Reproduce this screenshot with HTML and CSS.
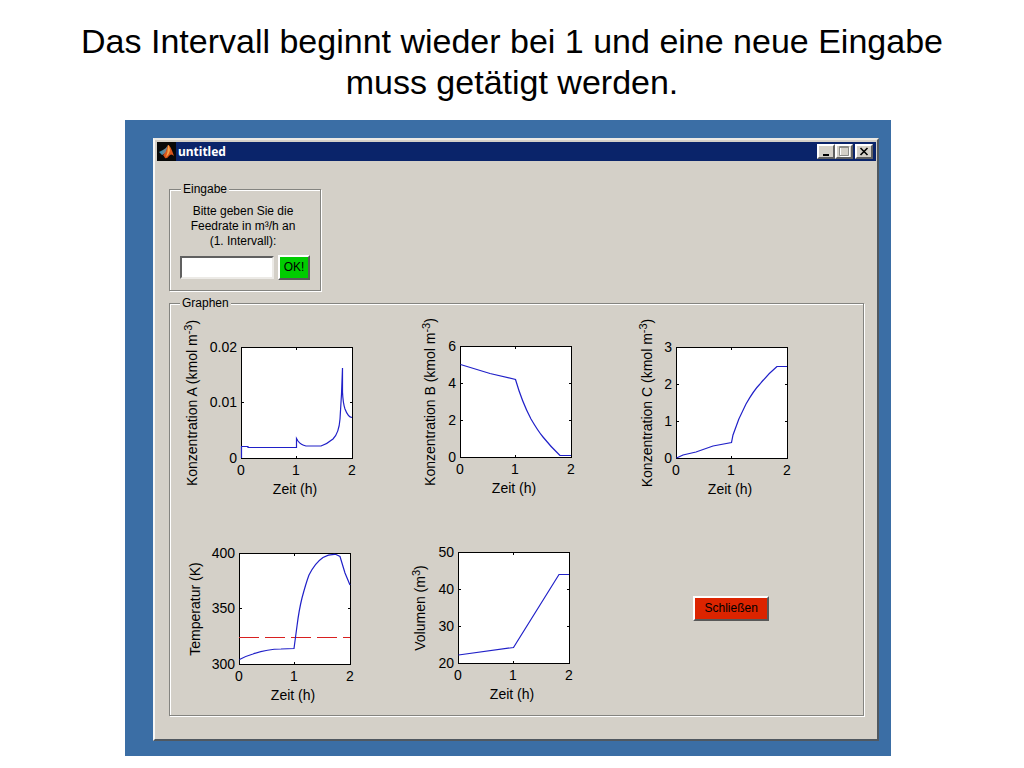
FILE: index.html
```html
<!DOCTYPE html>
<html lang="de">
<head>
<meta charset="utf-8">
<title>untitled</title>
<link rel="stylesheet" href="styles.css">
</head>
<body>
<h1 class="headline">Das Intervall beginnt wieder bei 1 und eine neue Eingabe<br>muss getätigt werden.</h1>
<main class="desktop">
  <section class="window">
    <header class="titlebar">
      <svg class="logo" viewBox="0 0 19 19" aria-hidden="true">
        <rect width="19" height="19" fill="#080808"/>
        <path d="M2 10 L6 8 L8 10 L5 13 Z" fill="#3f8fae"/>
        <path d="M6 8 Q9 7 11 3 L9 11 L5 13 Z" fill="#6b8795"/>
        <path d="M11 3 Q13 2 17 14 Q14 11 12 14 Q10 17 8 16 Q7 14 6 13 Q9 11 11 3 Z" fill="#d9541a"/>
        <path d="M11 3 Q12 3 13 8 Q12 13 9 15 Q11 10 11 3 Z" fill="#f6a54a"/>
      </svg>
      <span class="caption">untitled</span>
      <button class="winbtn" type="button" aria-label="Minimieren"><svg viewBox="0 0 14 11"><path d="M4 8h6v2H4z" fill="#000"/></svg></button>
      <button class="winbtn" type="button" aria-label="Maximieren"><svg viewBox="0 0 14 11"><path d="M3.500 1.500h9v9h-9z" fill="none" stroke="#fff"/><path d="M2.500 .500h9v9h-9z M2.500 1.500h9" fill="none" stroke="#8c8c88"/></svg></button>
      <button class="winbtn close" type="button" aria-label="Fenster schließen"><svg viewBox="0 0 14 11"><path d="M3.500 2l7 7M10.500 2l-7 7" stroke="#000" stroke-width="1.600"/></svg></button>
    </header>
    <div class="client">
      <fieldset class="panel entry">
        <legend>Eingabe</legend>
        <label class="prompt" for="feed">Bitte geben Sie die<br>Feedrate in m³/h an<br>(1. Intervall):</label>
        <div class="row">
          <input class="feed" id="feed" type="text">
          <button class="push ok" type="button">OK!</button>
        </div>
      </fieldset>
      <fieldset class="panel graphs">
        <legend>Graphen</legend>
        <div class="grid">
          <svg class="chart" width="190" height="190" role="img" aria-label="Konzentration A">
            <g transform="translate(60 36)">
              <rect class="plot" x=".5" y=".5" width="111" height="111"/>
              <path class="tick" d="M55.500 1v2M55.500 111v-2M1 55.500h2M111 55.500h-2"/>
              <path class="curve" d="M.5 111V99.500H7V100.500H55.500V91.500L57 94Q60 98 65 99H80Q86 97 92 92Q98 86 99 72L100.500 47L101.500 21V45Q102 56 104 62Q107 70 111 70.500"/>
              <g class="yt"><text x="-4" y="5">0.02</text><text x="-4" y="60">0.01</text><text x="-4" y="116">0</text></g>
              <g class="xt"><text x="0" y="128">0</text><text x="55" y="128">1</text><text x="111" y="128">2</text><text x="54" y="147">Zeit (h)</text></g>
              <text class="yl" transform="translate(-44 56) rotate(-90)">Konzentration A (kmol m<tspan class="sup" dy="-5">-3</tspan><tspan dy="5">)</tspan></text>
            </g>
          </svg>
          <svg class="chart" width="190" height="190" role="img" aria-label="Konzentration B">
            <g transform="translate(61 35)">
              <rect class="plot" x=".5" y=".5" width="111" height="111"/>
              <path class="tick" d="M55.500 1v2M55.500 111v-2M1 37.500h2M111 37.500h-2M1 74.500h2M111 74.500h-2"/>
              <path class="curve" d="M.5 18.500L30 27.500L55.500 33.500Q62 56 71 73Q78 85 83 91Q91 101 100 109.500H111"/>
              <g class="yt"><text x="-4" y="5">6</text><text x="-4" y="42">4</text><text x="-4" y="79">2</text><text x="-4" y="116">0</text></g>
              <g class="xt"><text x="0" y="128">0</text><text x="55" y="128">1</text><text x="111" y="128">2</text><text x="54" y="147">Zeit (h)</text></g>
              <text class="yl" transform="translate(-25 56) rotate(-90)">Konzentration B (kmol m<tspan class="sup" dy="-5">-3</tspan><tspan dy="5">)</tspan></text>
            </g>
          </svg>
          <svg class="chart" width="190" height="190" role="img" aria-label="Konzentration C">
            <g transform="translate(60 36)">
              <rect class="plot" x=".5" y=".5" width="111" height="111"/>
              <path class="tick" d="M55.500 1v2M55.500 111v-2M1 37.500h2M111 37.500h-2M1 74.500h2M111 74.500h-2"/>
              <path class="curve" d="M.5 111L7 108L20 105L37 99L55.500 95.500L57 88Q62 72 70 57Q78 43 84 37Q92 27 101 19.500H111"/>
              <g class="yt"><text x="-4" y="5">3</text><text x="-4" y="42">2</text><text x="-4" y="79">1</text><text x="-4" y="116">0</text></g>
              <g class="xt"><text x="0" y="128">0</text><text x="55" y="128">1</text><text x="111" y="128">2</text><text x="54" y="147">Zeit (h)</text></g>
              <text class="yl" transform="translate(-24 56) rotate(-90)">Konzentration C (kmol m<tspan class="sup" dy="-5">-3</tspan><tspan dy="5">)</tspan></text>
            </g>
          </svg>
          <svg class="chart" width="190" height="190" role="img" aria-label="Temperatur">
            <g transform="translate(58 36)">
              <rect class="plot" x=".5" y=".5" width="111" height="111"/>
              <path class="tick" d="M55.500 1v2M55.500 111v-2M1 55.500h2M111 55.500h-2"/>
              <path class="limit" d="M0 84.500H111"/>
              <path class="curve" d="M.5 106.500Q7 103 14 101Q28 96 42 96L55 95.500L58 73Q60 57 63 45Q67 30 70 22Q76 10 84 4.500Q90 1 97 1.500L101 3.500L106 20L111 32"/>
              <g class="yt"><text x="-4" y="5">400</text><text x="-4" y="60">350</text><text x="-4" y="116">300</text></g>
              <g class="xt"><text x="0" y="128">0</text><text x="55" y="128">1</text><text x="111" y="128">2</text><text x="54" y="147">Zeit (h)</text></g>
              <text class="yl" transform="translate(-39 56) rotate(-90)">Temperatur (K)</text>
            </g>
          </svg>
          <svg class="chart" width="190" height="190" role="img" aria-label="Volumen">
            <g transform="translate(59 35)">
              <rect class="plot" x=".5" y=".5" width="111" height="111"/>
              <path class="tick" d="M55.500 1v2M55.500 111v-2M1 37.500h2M111 37.500h-2M1 74.500h2M111 74.500h-2"/>
              <path class="curve" d="M.5 103L55.500 95.500L101 22.500H111"/>
              <g class="yt"><text x="-4" y="5">50</text><text x="-4" y="42">40</text><text x="-4" y="79">30</text><text x="-4" y="116">20</text></g>
              <g class="xt"><text x="0" y="128">0</text><text x="55" y="128">1</text><text x="111" y="128">2</text><text x="54" y="147">Zeit (h)</text></g>
              <text class="yl" transform="translate(-33 56) rotate(-90)">Volumen (m<tspan class="sup" dy="-5">3</tspan><tspan dy="5">)</tspan></text>
            </g>
          </svg>
          <button class="push quit" type="button">Schließen</button>
        </div>
      </fieldset>
    </div>
  </section>
</main>
</body>
</html>
```
FILE: styles.css
```css
* { box-sizing: border-box; }
body {
  margin: 0;
  padding: 21px 133px 13px 125px;
  background: #fff;
  color: #000;
  font: 12px/15px "Liberation Sans", Arial, sans-serif;
}
.headline {
  margin: 0 -60px 17px -52px;
  font-size: 34px;
  line-height: 41px;
  font-weight: 400;
  text-align: center;
}
.desktop {
  background: #3b6ea5;
  padding: 18px 12px 15px 28px;
}
.window {
  background: #d4d0c8;
  border: 2px solid;
  border-color: #ece9e4 #505860 #505860 #f8f8f6;
  padding: 2px 0 0 2px;
}
.titlebar {
  display: flex;
  align-items: center;
  height: 19px;
  margin-right: 1px;
  padding-right: 3px;
  background: #0a246a;
}
.logo { width: 19px; height: 19px; }
.caption {
  flex: 1;
  padding-left: 2px;
  color: #fff;
  font: bold 12px/19px "Noto Sans", sans-serif;
}
.winbtn {
  display: flex;
  width: 18px;
  height: 15px;
  padding: 0;
  background: #d4d0c8;
  border: 2px solid;
  border-color: #fff #606060 #606060 #fff;
}
.winbtn svg { width: 14px; height: 11px; }
.close { margin-left: 2px; }
.client { padding: 21px 13px 23px 12px; }
.panel {
  min-width: 0;
  margin: 0;
  padding: 0;
  border: 1px solid #848480;
  box-shadow: 1px 1px 0 #fff, inset 1px 1px 0 #fff;
}
.panel legend {
  margin-left: 10px;
  padding: 0 2px;
  background: #d4d0c8;
  line-height: 15px;
}
.entry {
  width: 152px;
  padding: 7px 10px 10px;
}
.entry legend { margin-left: 1px; }
.prompt {
  display: block;
  padding-right: 4px;
  text-align: center;
}
.row {
  display: flex;
  align-items: center;
  gap: 4px;
  margin-top: 6px;
}
.feed {
  flex: 1;
  min-width: 0;
  height: 23px;
  padding: 0 3px;
  background: #fff;
  border: 2px solid;
  border-color: #606060 #eceae6 #eceae6 #606060;
}
.push {
  height: 25px;
  padding: 0;
  border: 2px solid;
  border-color: #fff #585858 #585858 #fff;
  color: #000;
  font: inherit;
}
.ok { width: 32px; background: #00cc00; }
.graphs { margin-top: 5px; }
.grid {
  display: grid;
  grid-template-columns: repeat(3, 1fr);
  row-gap: 16px;
  padding: 0 29px 8px 11px;
}
.chart { display: block; font-size: 14px; }
.plot { fill: #fff; stroke: #000; }
.tick { stroke: #000; }
.curve { fill: none; stroke: #2020c8; stroke-width: 1.2; }
.limit { stroke: #d82020; stroke-dasharray: 20 6; }
.yt { text-anchor: end; }
.xt, .yl { text-anchor: middle; }
.sup { font-size: 11px; }
.quit {
  place-self: center;
  width: 76px;
  margin-left: 12px;
  margin-bottom: 8px;
  background: #dc2400;
}
```
